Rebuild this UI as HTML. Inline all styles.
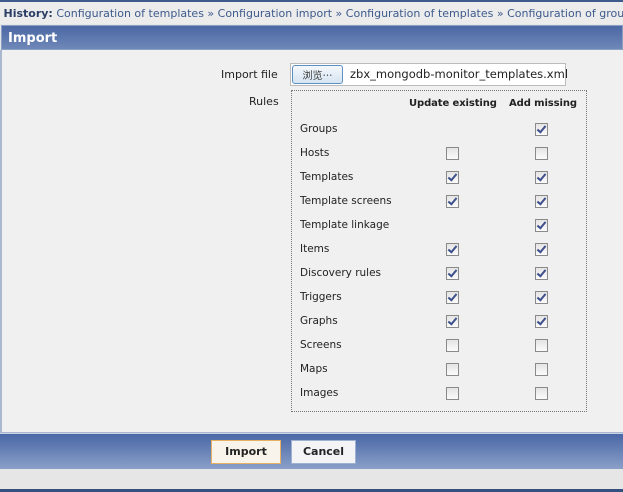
<!DOCTYPE html>
<html><head><style>
body{margin:0;width:623px;height:492px;overflow:hidden;background:#e6e6e6;font-family:"DejaVu Sans","Liberation Sans",sans-serif;font-size:11px;color:#222;position:relative}
.a{position:absolute}
.cb{position:absolute;width:11px;height:11px;border:1px solid #8a8a8a;background:linear-gradient(#e4e4e4,#fbfbfb)}
.cb.c::after{content:"";position:absolute;left:3px;top:0px;width:3px;height:7px;border:solid #3c4f8a;border-width:0 2px 2px 0;transform:rotate(40deg)}
.lbl{position:absolute;left:300px;font-size:10.5px}
</style></head><body>
<div class="a" style="left:0;top:0;width:623px;height:2px;background:#3f5a8c"></div>
<div class="a" style="left:0;top:2px;width:623px;height:22px;background:#ececec;white-space:nowrap;line-height:23px;font-size:11px;color:#3d5a8c">&nbsp;<b style="color:#2b3e66">History:</b> Configuration of templates » Configuration import » Configuration of templates » Configuration of groups</div>
<div class="a" style="left:1px;top:25px;width:622px;height:25px;background:linear-gradient(#4b68a5,#6f88b8);border:1px solid #8aa0c4;box-sizing:border-box;color:#fff;font-weight:bold;font-size:13px;line-height:25px;padding-left:6px">Import</div>
<div class="a" style="left:0;top:50px;width:623px;height:383px;background:#f0f0f0;border-left:2px solid #a9b8cf;border-bottom:1px solid #a9b8cf;box-sizing:border-box"></div>
<div class="a" style="left:221px;top:68px">Import file</div>
<div class="a" style="left:249px;top:95px">Rules</div>
<div class="a" style="left:290px;top:63px;width:276px;height:23px;background:#fff;border:1px solid #bbb;box-sizing:border-box"></div>
<div class="a" style="left:292px;top:65px;width:51px;height:19px;border:1px solid #5d8fc0;border-radius:3px;background:linear-gradient(#f4f8fc,#d6e4f2);box-sizing:border-box;text-align:center;font-family:'Noto Sans CJK SC',sans-serif;font-size:10px;line-height:17px;color:#333">浏览…</div>
<div class="a" style="left:350px;top:67px;font-size:11.5px">zbx_mongodb-monitor_templates.xml</div>
<div class="a" style="left:291px;top:90px;width:296px;height:322px;border:1px dotted #777;box-sizing:border-box"></div>
<div class="a" style="left:409px;top:98px;font-weight:bold;font-size:10px;letter-spacing:-0.1px">Update existing</div>
<div class="a" style="left:509px;top:98px;font-weight:bold;font-size:10px;letter-spacing:-0.1px">Add missing</div>
<div class="lbl" style="top:123px">Groups</div>
<div class="lbl" style="top:147px">Hosts</div>
<div class="lbl" style="top:171px">Templates</div>
<div class="lbl" style="top:195px">Template screens</div>
<div class="lbl" style="top:219px">Template linkage</div>
<div class="lbl" style="top:243px">Items</div>
<div class="lbl" style="top:267px">Discovery rules</div>
<div class="lbl" style="top:291px">Triggers</div>
<div class="lbl" style="top:315px">Graphs</div>
<div class="lbl" style="top:339px">Screens</div>
<div class="lbl" style="top:363px">Maps</div>
<div class="lbl" style="top:387px">Images</div>
<div class="cb c" style="left:535px;top:123px"></div>
<div class="cb" style="left:446px;top:147px"></div><div class="cb" style="left:535px;top:147px"></div>
<div class="cb c" style="left:446px;top:171px"></div><div class="cb c" style="left:535px;top:171px"></div>
<div class="cb c" style="left:446px;top:195px"></div><div class="cb c" style="left:535px;top:195px"></div>
<div class="cb c" style="left:535px;top:219px"></div>
<div class="cb c" style="left:446px;top:243px"></div><div class="cb c" style="left:535px;top:243px"></div>
<div class="cb c" style="left:446px;top:267px"></div><div class="cb c" style="left:535px;top:267px"></div>
<div class="cb c" style="left:446px;top:291px"></div><div class="cb c" style="left:535px;top:291px"></div>
<div class="cb c" style="left:446px;top:315px"></div><div class="cb c" style="left:535px;top:315px"></div>
<div class="cb" style="left:446px;top:339px"></div><div class="cb" style="left:535px;top:339px"></div>
<div class="cb" style="left:446px;top:363px"></div><div class="cb" style="left:535px;top:363px"></div>
<div class="cb" style="left:446px;top:387px"></div><div class="cb" style="left:535px;top:387px"></div>
<div class="a" style="left:0;top:433px;width:623px;height:36px;background:linear-gradient(#4a67a6,#8aa0c8);border-top:1px solid #c6d2e4;box-sizing:border-box"></div>
<div class="a" style="left:211px;top:440px;width:70px;height:24px;background:#f8f4ec;border:1px solid #e8b060;box-sizing:border-box;text-align:center;line-height:22px;font-weight:bold;font-size:11px">Import</div>
<div class="a" style="left:291px;top:440px;width:65px;height:24px;background:#f4f4f6;border:1px solid #9fb0d0;box-sizing:border-box;text-align:center;line-height:22px;font-weight:bold;font-size:11px">Cancel</div>
<div class="a" style="left:0;top:489px;width:623px;height:3px;background:#34507e"></div>
</body></html>
